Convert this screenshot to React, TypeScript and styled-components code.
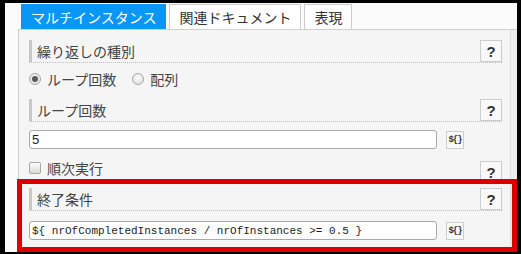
import React from 'react';
import styled, { createGlobalStyle } from 'styled-components';

const GlobalStyle = createGlobalStyle`
  html, body {
    margin: 0;
    padding: 0;
    background: #000;
  }
  * {
    box-sizing: border-box;
  }
`;

const Screen = styled.div`
  position: relative;
  width: 521px;
  height: 254px;
  overflow: hidden;
  background: #000;
  font-family: 'Noto Sans CJK JP', 'Noto Sans', sans-serif;
  color: #333;
`;

const Frame = styled.div`
  margin: 3px 4px 0 5px;
  height: 249px;
  padding: 1px 0 0 13px;
  background: #fbfbfb;
  display: flex;
  flex-direction: column;
`;

const TabBar = styled.div`
  display: flex;
  gap: 3px;
  padding-left: 3px;
  height: 25px;
`;

const Tab = styled.div<{ $active?: boolean }>`
  height: 25px;
  padding: 0 9px;
  display: flex;
  align-items: center;
  font-size: 14px;
  line-height: 1;
  white-space: nowrap;
  color: ${(p) => (p.$active ? '#fff' : '#333')};
  background: ${(p) => (p.$active ? '#0a96f5' : '#fff')};
  border: 1px solid ${(p) => (p.$active ? '#0a96f5' : '#ccc')};
  border-bottom: none;
`;

const Panel = styled.div`
  flex: 1;
  display: flex;
  border-top: 1px solid #cfcfcf;
  border-left: 1px solid #cfcfcf;
`;

const PanelBody = styled.div`
  flex: 1;
  background: #f5f5f5;
  padding: 10px 8px 0 10px;
  display: flex;
  flex-direction: column;
`;

const Gutter = styled.div`
  width: 7px;
  background: #ececec;
  border-left: 1px solid #e0e0e0;
`;

const SectionHeader = styled.div<{ $top?: number }>`
  display: flex;
  align-items: flex-start;
  justify-content: space-between;
  height: 23px;
  margin-top: ${(p) => p.$top ?? 0}px;
  border-bottom: 1px dotted #bdbdbd;
`;

const SectionTitle = styled.div`
  height: 22px;
  padding-left: 5px;
  border-left: 3px solid #c8c8c8;
  display: flex;
  align-items: center;
  font-size: 14px;
  color: #444;
  line-height: 1;
`;

const HelpButton = styled.div`
  width: 22px;
  height: 22px;
  border: 1px solid #cdcdcd;
  background: #f9f9f9;
  display: flex;
  align-items: center;
  justify-content: center;
  font-family: 'Liberation Sans', Arial, sans-serif;
  font-weight: bold;
  font-size: 15px;
  color: #333;
`;

const OptionRow = styled.div`
  height: 32px;
  margin-bottom: 4px;
  display: flex;
  align-items: center;
  gap: 6px;
  font-size: 14px;
  color: #444;
`;

const RadioDot = styled.span<{ $checked?: boolean }>`
  width: 12px;
  height: 12px;
  border-radius: 50%;
  border: 1px solid #a8a8a8;
  background: radial-gradient(circle at 50% 40%, #fdfdfd, #d8d8d8);
  display: inline-flex;
  align-items: center;
  justify-content: center;
  &::after {
    content: '';
    width: 6px;
    height: 6px;
    border-radius: 50%;
    background: ${(p) => (p.$checked ? '#5a5a5a' : 'transparent')};
  }
`;

const OptionLabel = styled.span<{ $gapAfter?: number }>`
  line-height: 1;
  margin-right: ${(p) => p.$gapAfter ?? 0}px;
`;

const InputRow = styled.div<{ $top: number }>`
  display: flex;
  align-items: center;
  gap: 9px;
  margin-top: ${(p) => p.$top}px;
`;

const TextBox = styled.div<{ $mono?: boolean }>`
  width: 408px;
  height: 19px;
  border: 1px solid #a9a9a9;
  border-radius: 3px;
  background: #fff;
  padding-left: 2px;
  display: flex;
  align-items: center;
  white-space: pre;
  overflow: hidden;
  color: #222;
  font-family: ${(p) =>
    p.$mono ? "'Liberation Mono', 'DejaVu Sans Mono', monospace" : "'Liberation Sans', Arial, sans-serif"};
  font-size: ${(p) => (p.$mono ? '11px' : '13px')};
`;

const ExprButton = styled.div`
  width: 18px;
  height: 18px;
  border: 1px solid #cdcdcd;
  background: #f9f9f9;
  display: flex;
  align-items: center;
  justify-content: center;
  font-family: 'Liberation Mono', monospace;
  font-weight: bold;
  font-size: 9px;
  letter-spacing: -1px;
  color: #333;
`;

const CheckRow = styled.div`
  height: 35px;
  display: flex;
  justify-content: space-between;
`;

const CheckLabel = styled.label`
  display: flex;
  align-items: center;
  gap: 6px;
  height: 16px;
  margin-top: 11px;
  font-size: 14px;
  color: #444;
  line-height: 1;
`;

const CheckBox = styled.span`
  width: 12px;
  height: 12px;
  border: 1px solid #a8a8a8;
  border-radius: 2px;
  background: linear-gradient(#fdfdfd, #dadada);
`;

const LowHelp = styled(HelpButton)`
  align-self: flex-end;
  margin-bottom: 1px;
`;

const Highlight = styled.div`
  position: absolute;
  left: 17px;
  top: 179px;
  width: 500px;
  height: 73px;
  border: 5px solid #dc0000;
  pointer-events: none;
`;

export default function App() {
  return (
    <Screen>
      <GlobalStyle />
      <Frame>
        <TabBar>
          <Tab $active>マルチインスタンス</Tab>
          <Tab>関連ドキュメント</Tab>
          <Tab>表現</Tab>
        </TabBar>
        <Panel>
          <PanelBody>
            <SectionHeader>
              <SectionTitle>繰り返しの種別</SectionTitle>
              <HelpButton>?</HelpButton>
            </SectionHeader>
            <OptionRow>
              <RadioDot $checked />
              <OptionLabel $gapAfter={10}>ループ回数</OptionLabel>
              <RadioDot />
              <OptionLabel>配列</OptionLabel>
            </OptionRow>
            <SectionHeader>
              <SectionTitle>ループ回数</SectionTitle>
              <HelpButton>?</HelpButton>
            </SectionHeader>
            <InputRow $top={8}>
              <TextBox>5</TextBox>
              <ExprButton>{'${}'}</ExprButton>
            </InputRow>
            <CheckRow>
              <CheckLabel>
                <CheckBox />
                順次実行
              </CheckLabel>
              <LowHelp>?</LowHelp>
            </CheckRow>
            <SectionHeader $top={4}>
              <SectionTitle>終了条件</SectionTitle>
              <HelpButton>?</HelpButton>
            </SectionHeader>
            <InputRow $top={10}>
              <TextBox $mono>{'${ nrOfCompletedInstances / nrOfInstances >= 0.5 }'}</TextBox>
              <ExprButton>{'${}'}</ExprButton>
            </InputRow>
          </PanelBody>
          <Gutter />
        </Panel>
      </Frame>
      <Highlight />
    </Screen>
  );
}
